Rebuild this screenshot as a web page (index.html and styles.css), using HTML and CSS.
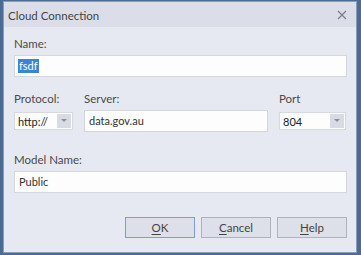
FILE: index.html
```html
<!DOCTYPE html>
<html>
<head>
<meta charset="utf-8">
<link rel="stylesheet" href="styles.css">
</head>
<body>
<div class="dialog">
  <div class="titlebar">
    <span class="title">Cloud Connection</span>
    <svg class="close" width="10" height="10" viewBox="0 0 10 10"><path d="M1 1L9 9M9 1L1 9" stroke="#7b808b" stroke-width="1.3" fill="none"/></svg>
  </div>
  <div class="content">
    <div class="field">
      <div class="label">Name:</div>
      <div class="input"><span class="sel">fsdf</span></div>
    </div>
    <div class="row">
      <div class="field">
        <div class="label">Protocol:</div>
        <div class="combo"><span class="val">http://</span><span class="drop"><svg width="6" height="4" viewBox="0 0 6 4"><path d="M0 0H6L3 3Z" fill="#8a8f99"/></svg></span></div>
      </div>
      <div class="field">
        <div class="label">Server:</div>
        <div class="input">data.gov.au</div>
      </div>
      <div class="field">
        <div class="label">Port</div>
        <div class="combo"><span class="val">804</span><span class="drop"><svg width="6" height="4" viewBox="0 0 6 4"><path d="M0 0H6L3 3Z" fill="#8a8f99"/></svg></span></div>
      </div>
    </div>
    <div class="field model">
      <div class="label">Model Name:</div>
      <div class="input">Public</div>
    </div>
    <div class="buttons">
      <div class="btn default"><u>O</u>K</div>
      <div class="btn"><u>C</u>ancel</div>
      <div class="btn"><u>H</u>elp</div>
    </div>
  </div>
</div>
</body>
</html>
```
FILE: styles.css
```css
html, body {
  margin: 0;
  padding: 0;
}
body {
  width: 361px;
  height: 255px;
  background: #4a6b96;
  font-family: Lato, "Liberation Sans", sans-serif;
  font-size: 11.5px;
  color: #444;
  overflow: hidden;
  padding-top: 1px;
  box-sizing: border-box;
}
.dialog {
  margin-left: 3px;
  width: 354px;
  height: 252px;
  box-sizing: border-box;
  border: 1px solid #8e9bb0;
  background: #e6e9f1;
  display: flex;
  flex-direction: column;
}
.titlebar {
  height: 25px;
  background: #dbdee8;
  display: flex;
  align-items: center;
  justify-content: space-between;
  padding: 0 9px 0 4px;
}
.title {
  font-size: 11.5px;
  color: #444;
  padding-top: 1px;
}
.close {
  display: block;
}
.content {
  padding: 10px 9px 0 10px;
  display: flex;
  flex-direction: column;
}
.field {
  display: flex;
  flex-direction: column;
}
.label {
  line-height: 14px;
  height: 14px;
  margin-bottom: 4px;
  color: #4a4a4a;
}
.input {
  height: 22px;
  box-sizing: border-box;
  background: #fdfdfd;
  border: 1px solid #d3d6dd;
  padding: 0 4px;
  line-height: 20px;
  font-size: 11px;
  color: #333;
}
.sel {
  background: #3a85d8;
  color: #fff;
  display: inline-block;
  line-height: 14px;
  padding: 0 1px;
  margin-left: -1px;
}
.row {
  margin-top: 15px;
  display: grid;
  grid-template-columns: 59px 184px 67px;
  column-gap: 11px;
}
.row .combo {
  margin-top: 2px;
}
.combo {
  height: 18px;
  box-sizing: border-box;
  background: #fdfdfd;
  border: 1px solid #d6d9df;
  display: flex;
  align-items: stretch;
  justify-content: space-between;
  padding: 1px 1px 1px 3px;
}
.val {
  line-height: 15px;
  font-size: 11px;
  color: #222;
}
.drop {
  width: 14px;
  background: #d8dbe3;
  display: flex;
  align-items: center;
  justify-content: center;
}
.drop svg {
  display: block;
}
.model {
  margin-top: 21px;
}
.buttons {
  margin-top: 24px;
  display: flex;
  justify-content: flex-end;
  gap: 6px;
}
.btn {
  width: 70px;
  height: 21px;
  box-sizing: border-box;
  border: 1px solid #adb2bd;
  background: #dde0e8;
  text-align: center;
  line-height: 19px;
  color: #444;
}
.btn.default {
  border-color: #7d9fca;
}
.btn u {
  text-decoration-thickness: 1px;
  text-underline-offset: 2px;
}
```
